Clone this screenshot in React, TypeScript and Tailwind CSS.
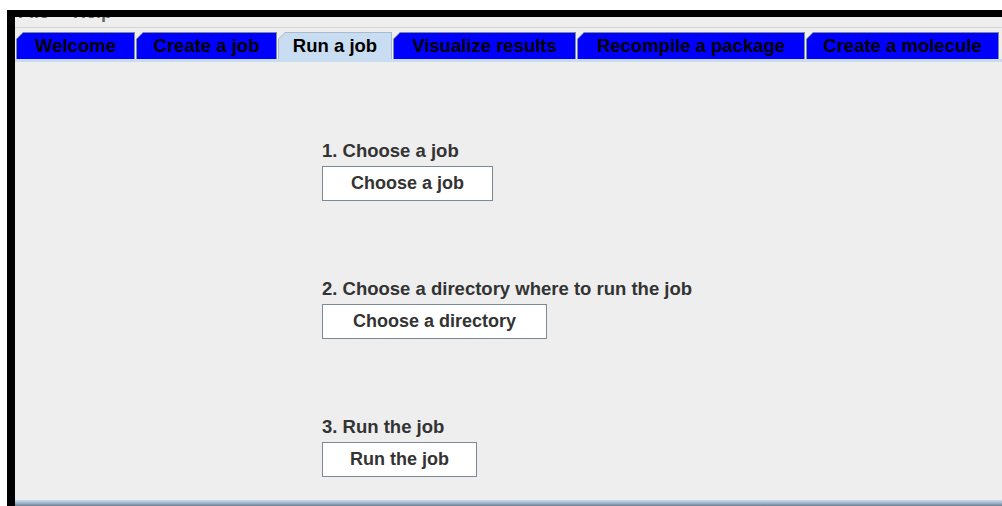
import React from "react";

type Tab = { label: string; width: string; active?: boolean };

const tabs: Tab[] = [
  { label: "Welcome", width: "w-[119px]" },
  { label: "Create a job", width: "w-[141px]" },
  { label: "Run a job", width: "w-[114px]", active: true },
  { label: "Visualize results", width: "w-[183px]" },
  { label: "Recompile a package", width: "w-[228px]" },
  { label: "Create a molecule", width: "w-[193px]" },
];

const steps = [
  { title: "1. Choose a job", button: "Choose a job", width: "w-[171px]" },
  { title: "2. Choose a directory where to run the job", button: "Choose a directory", width: "w-[225px]" },
  { title: "3. Run the job", button: "Run the job", width: "w-[155px]" },
];

function TabButton({ tab }: { tab: Tab }) {
  return (
    <div
      className={`h-[27px] ${tab.width} shrink-0 p-px pb-0 ${
        tab.active ? "bg-[#a9bccf]" : "bg-[#7a8a99]"
      } [clip-path:polygon(0_7px,7px_0,100%_0,100%_100%,0_100%)]`}
    >
      <div
        className={`flex h-full w-full items-center justify-center text-[18.5px] font-bold leading-none text-black [clip-path:polygon(0_6px,6px_0,100%_0,100%_100%,0_100%)] ${
          tab.active ? "bg-[#c8ddf2]" : "bg-[#0000ff]"
        }`}
      >
        {tab.label}
      </div>
    </div>
  );
}

export default function App() {
  return (
    <div
      className="flex h-[506px] w-[1002px] flex-col overflow-hidden bg-white pl-[7px] pt-[10px]"
      style={{ fontFamily: '"Liberation Sans", Arial, sans-serif' }}
    >
      <div className="flex flex-1 flex-col border-l-[8px] border-t-[7px] border-black bg-[#eeeeee]">
        {/* menu bar, mostly scrolled off */}
        <div className="h-[11px] overflow-hidden border-b border-[#d6d6d6] bg-[#eeeeee]">
          <div className="-mt-[14px] flex gap-[24px] pl-[3px] text-[18px] font-bold leading-none text-[#666]">
            <span>File</span>
            <span>Help</span>
          </div>
        </div>

        {/* tab strip */}
        <div className="mt-[4px] flex gap-px pl-px">
          {tabs.map((t) => (
            <TabButton key={t.label} tab={t} />
          ))}
        </div>
        <div className="h-[3px] bg-[#c8ddf2]" />

        {/* Run a job panel */}
        <div className="flex flex-1 flex-col gap-[77px] pl-[307px] pt-[78px] text-[#333333]">
          {steps.map((s) => (
            <div key={s.title} className="flex flex-col gap-[5px]">
              <div className="text-[18.5px] font-bold leading-[21px]">{s.title}</div>
              <button
                className={`${s.width} h-[35px] border border-[#7a8a99] bg-white text-[18px] font-bold text-[#333333]`}
              >
                {s.button}
              </button>
            </div>
          ))}
        </div>

        <div className="h-[6px] bg-gradient-to-b from-[#c8ddf2] via-[#a3b6ca] to-[#6b7c90]" />
      </div>
    </div>
  );
}
